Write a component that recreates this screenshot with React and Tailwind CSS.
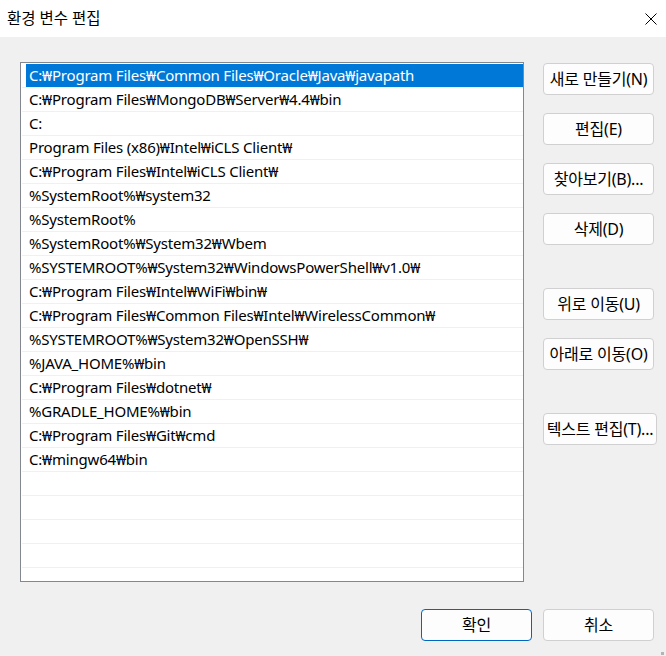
const paths = [
  "C:₩Program Files₩Common Files₩Oracle₩Java₩javapath",
  "C:₩Program Files₩MongoDB₩Server₩4.4₩bin",
  "C:",
  "Program Files (x86)₩Intel₩iCLS Client₩",
  "C:₩Program Files₩Intel₩iCLS Client₩",
  "%SystemRoot%₩system32",
  "%SystemRoot%",
  "%SystemRoot%₩System32₩Wbem",
  "%SYSTEMROOT%₩System32₩WindowsPowerShell₩v1.0₩",
  "C:₩Program Files₩Intel₩WiFi₩bin₩",
  "C:₩Program Files₩Common Files₩Intel₩WirelessCommon₩",
  "%SYSTEMROOT%₩System32₩OpenSSH₩",
  "%JAVA_HOME%₩bin",
  "C:₩Program Files₩dotnet₩",
  "%GRADLE_HOME%₩bin",
  "C:₩Program Files₩Git₩cmd",
  "C:₩mingw64₩bin",
  "",
  "",
  "",
  "",
  "",
];

const font = { fontFamily: '"Noto Sans", "Noto Sans CJK KR", sans-serif' };

function Btn({ children, primary, className = "" }) {
  return (
    <button
      className={`h-[32px] rounded-[4px] border bg-[#fdfdfd] text-[16px] tracking-[-0.2px] text-black flex items-center justify-center whitespace-nowrap ${
        primary ? "border-[#0067c0]" : "border-[#d0d0d0]"
      } ${className}`}
    >
      {children}
    </button>
  );
}

export default function App() {
  return (
    <div
      className="relative w-[666px] h-[656px] bg-[#f0f0f0] flex flex-col overflow-hidden"
      style={font}
    >
      {/* Title bar */}
      <div className="h-[37px] bg-white flex items-center justify-between pl-[7px] pr-[9px]">
        <span className="text-[15.5px] text-black">환경 변수 편집</span>
        <svg width="12" height="12" viewBox="0 0 12 12" className="text-black">
          <path d="M0.5 0.5 L11.5 11.5 M11.5 0.5 L0.5 11.5" stroke="currentColor" strokeWidth="1" />
        </svg>
      </div>

      {/* Body */}
      <div className="flex pt-[25px] pl-[20px] gap-[19px]">
        <div className="w-[504px] h-[520px] border border-[#828790] bg-white overflow-hidden pt-[1px]">
          {paths.map((p, i) => (
            <div key={i} className="h-[24px] flex border-b border-[#f0f0f0] ml-[1px]">
              <div
                className={`flex-1 ml-[4px] pl-[3px] flex items-center text-[15px] tracking-[-0.2px] whitespace-nowrap ${
                  i === 0 ? "bg-[#0078d7] text-white" : "text-black"
                }`}
              >
                {p}
              </div>
            </div>
          ))}
        </div>

        <div className="flex flex-col pt-[1px]">
          <Btn className="w-[111px]">새로 만들기(N)</Btn>
          <Btn className="w-[111px] mt-[18px]">편집(E)</Btn>
          <Btn className="w-[111px] mt-[18px]">찾아보기(B)...</Btn>
          <Btn className="w-[111px] mt-[18px]">삭제(D)</Btn>
          <Btn className="w-[111px] mt-[43px]">위로 이동(U)</Btn>
          <Btn className="w-[111px] mt-[18px]">아래로 이동(O)</Btn>
          <Btn className="w-[114px] mt-[43px]">텍스트 편집(T)...</Btn>
        </div>
      </div>

      {/* Footer */}
      <div className="flex justify-end gap-[11px] pr-[12px] mt-[27px]">
        <Btn primary className="w-[111px]">확인</Btn>
        <Btn className="w-[111px]">취소</Btn>
      </div>

      {/* resize grip */}
      <div className="absolute right-[2px] bottom-[1px] w-[3px] h-[3px] bg-[#b4b4b4]" />
    </div>
  );
}
